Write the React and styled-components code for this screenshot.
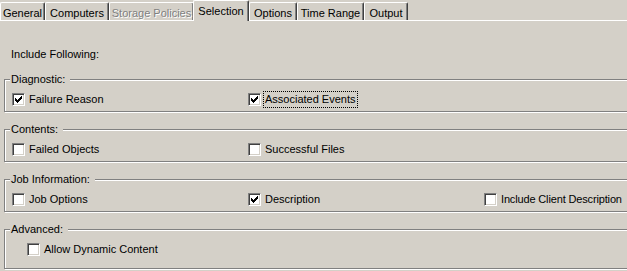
import React from "react";
import styled, { createGlobalStyle } from "styled-components";

const Global = createGlobalStyle`
  html, body { margin: 0; padding: 0; background: #d4d0c8; overflow: hidden; }
  * { box-sizing: border-box; }
`;

const Page = styled.div`
  width: 627px;
  height: 271px;
  overflow: hidden;
  background: #d4d0c8;
  font-family: "Liberation Sans", Arial, sans-serif;
  font-size: 11px;
  color: #000;
`;

const TabStrip = styled.div`
  display: flex;
  align-items: flex-end;
  height: 21px;
  border-bottom: 1px solid #fff;
`;

const Tab = styled.div`
  position: relative;
  flex: none;
  width: ${(p) => p.$w}px;
  height: ${(p) => (p.$active ? 21 : 18)}px;
  margin-left: ${(p) => (p.$active ? -1 : 0)}px;
  margin-bottom: ${(p) => (p.$active ? -1 : 0)}px;
  z-index: ${(p) => (p.$active ? 1 : 0)};
  padding-top: 4px;
  background: #d4d0c8;
  border-top: 1px solid #fff;
  border-left: 1px solid #fff;
  border-right: 1px solid #404040;
  border-radius: 2px 2px 0 0;
  box-shadow: inset -1px 0 0 #808080;
  text-align: center;
  white-space: nowrap;
  line-height: 13px;
  color: ${(p) => (p.$disabled ? "#808080" : "#000")};
  text-shadow: ${(p) => (p.$disabled ? "1px 1px 0 #fff" : "none")};
`;

const IncludeLabel = styled.div`
  margin: 27px 0 0 11px;
  line-height: 13px;
`;

const Group = styled.fieldset`
  min-width: 0;
  width: 700px;
  margin: ${(p) => p.$mt}px 0 0 4px;
  padding: 7px 0 ${(p) => p.$pb}px 0;
  border: 1px solid #808080;
  box-shadow: inset 1px 1px 0 #fff, 1px 1px 0 #fff;
`;

const Legend = styled.legend`
  margin-left: 5px;
  padding: 0 5px 0 1px;
  line-height: 13px;
  background: #d4d0c8;
`;

const Row = styled.div`
  display: grid;
  grid-template-columns: 236px 236px auto;
  padding-left: ${(p) => p.$indent}px;
  height: 13px;
`;

const Item = styled.label`
  display: flex;
  align-items: flex-start;
  gap: 4px;
  line-height: 13px;
  white-space: nowrap;
`;

const Box = styled.span`
  flex: none;
  width: 13px;
  height: 13px;
  background: #fff;
  border: 1px solid;
  border-color: #808080 #fff #fff #808080;
  box-shadow: inset 1px 1px 0 #404040, inset -1px -1px 0 #d4d0c8;
  svg { display: block; }
`;

const Text = styled.span`
  letter-spacing: ${(p) => (p.$tight ? "-0.15px" : "0")};
  outline: ${(p) => (p.$focus ? "1px dotted #000" : "none")};
  outline-offset: 1px;
`;

const Check = () => (
  <svg width="11" height="11" viewBox="0 0 11 11" shapeRendering="crispEdges">
    <path
      fill="#000"
      d="M2 4h1v3h-1z M3 5h1v3h-1z M4 6h1v3h-1z M5 5h1v3h-1z M6 4h1v3h-1z M7 3h1v3h-1z M8 2h1v3h-1z"
    />
  </svg>
);

const CheckItem = ({ label, checked, focus, tight }) => (
  <Item>
    <Box>{checked && <Check />}</Box>
    <Text $focus={focus} $tight={tight}>{label}</Text>
  </Item>
);

const tabs = [
  { label: "General", w: 45 },
  { label: "Computers", w: 64 },
  { label: "Storage Policies", w: 85, disabled: true },
  { label: "Selection", w: 56, active: true },
  { label: "Options", w: 48 },
  { label: "Time Range", w: 67 },
  { label: "Output", w: 44 },
];

export default function App() {
  return (
    <Page>
      <Global />
      <TabStrip>
        {tabs.map((t) => (
          <Tab key={t.label} $w={t.w} $active={t.active} $disabled={t.disabled}>
            {t.label}
          </Tab>
        ))}
      </TabStrip>
      <IncludeLabel>Include Following:</IncludeLabel>

      <Group $mt={12} $pb={5}>
        <Legend>Diagnostic:</Legend>
        <Row $indent={7}>
          <CheckItem label="Failure Reason" checked />
          <CheckItem label="Associated Events" checked focus />
        </Row>
      </Group>

      <Group $mt={11} $pb={5}>
        <Legend>Contents:</Legend>
        <Row $indent={7}>
          <CheckItem label="Failed Objects" />
          <CheckItem label="Successful Files" />
        </Row>
      </Group>

      <Group $mt={11} $pb={5}>
        <Legend>Job Information:</Legend>
        <Row $indent={7}>
          <CheckItem label="Job Options" />
          <CheckItem label="Description" checked />
          <CheckItem label="Include Client Description" tight />
        </Row>
      </Group>

      <Group $mt={11} $pb={12}>
        <Legend>Advanced:</Legend>
        <Row $indent={22}>
          <CheckItem label="Allow Dynamic Content" />
        </Row>
      </Group>
    </Page>
  );
}
